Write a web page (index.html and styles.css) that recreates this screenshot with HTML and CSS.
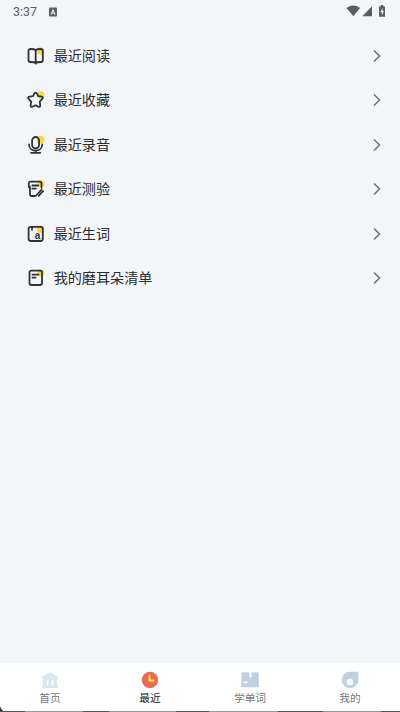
FILE: index.html
```html
<!DOCTYPE html>
<html lang="zh-CN">
<head>
<meta charset="utf-8">
<title>最近</title>
<link rel="stylesheet" href="styles.css">
</head>
<body>
<div class="app">
  <header class="status">
    <span class="time">3:37</span>
    <svg class="badge" width="8" height="10" viewBox="0 0 8 10"><rect y=".5" width="8" height="9" rx="1" fill="#5c5d5f"/><path d="M2 7.700 4 2.700 6 7.700M2.800 6h2.400" fill="none" stroke="#f2f6f9"/></svg>
    <svg class="signals" width="42" height="14" viewBox="0 0 42 14" fill="#5c5d5f"><path d="M.5 4Q7.300-.8 14 4L7.300 12.300z"/><path d="M16.300 12.300 26 2.300v10z"/><path d="M33 2.500h1.700V1h2.600v1.500H39v10.200h-6z"/><path d="M36.700 4 34.300 8h1.500v3.200l2.200-4h-1.500z" fill="#f2f6f9"/></svg>
  </header>
  <main class="list">
    <a class="row">
      <svg class="icon" viewBox="0 0 20 20"><circle class="dot" cx="14.500" cy="5" r="3.700"/><path d="M9.700 4.200C8.500 3 7 3 4.600 3Q2.500 3 2.500 5v9.300q0 1.700 2 1.700c2 0 4 0 5.200 1 1.200-1 3.200-1 5.300-1q1.800 0 1.800-1.700V5q0-2-2-2C12.500 3 11 3 9.700 4.200V17.500"/></svg>
      <span class="label">最近阅读</span>
      <svg class="chevron" viewBox="0 0 8 14"><path d="m1 1.500 5.500 5.500L1 12.500"/></svg>
    </a>
    <a class="row">
      <svg class="icon" viewBox="0 0 20 20"><circle class="dot" cx="14.800" cy="5" r="3.700"/><path d="M8.300 3.600Q9.700 1.500 11 3.600l1.200 2.500 3.300.6q2.300.5.800 2.200l-2.500 2.600.4 3.900q0 2-2 1.200L9.600 15.200 6.500 16.700q-2 .7-1.900-1.300l.6-3.800L2.600 9Q1.300 7.200 3.500 6.700l3.500-.6z"/></svg>
      <span class="label">最近收藏</span>
      <svg class="chevron" viewBox="0 0 8 14"><path d="m1 1.500 5.500 5.500L1 12.500"/></svg>
    </a>
    <a class="row">
      <svg class="icon" viewBox="0 0 20 20"><circle class="dot" cx="14.500" cy="4.700" r="3.900"/><rect x="6.100" y="2" width="7" height="11.300" rx="3.500"/><path d="M3 9.500c.2 8.200 13 8.200 13.300 0M9.700 15.500v2.300M5 17.800h9.300"/></svg>
      <span class="label">最近录音</span>
      <svg class="chevron" viewBox="0 0 8 14"><path d="m1 1.500 5.500 5.500L1 12.500"/></svg>
    </a>
    <a class="row">
      <svg class="icon" viewBox="0 0 20 20"><circle class="dot" cx="14.800" cy="4.800" r="3.700"/><path d="M9 17H5.500q-1.500 0-1.500-2V8H2.800V4.500Q2.800 2.600 4.600 2.600H13.500q2 0 2 2v4M6.300 6.500h6M6.300 9.600h3.500M10.300 16.500l5.300-6M12.800 16.800l2.800-3.300M16 13l1.200-.8"/></svg>
      <span class="label">最近&#x6D4B;验</span>
      <svg class="chevron" viewBox="0 0 8 14"><path d="m1 1.500 5.500 5.500L1 12.500"/></svg>
    </a>
    <a class="row">
      <svg class="icon" viewBox="0 0 20 20"><circle class="dot" cx="14.500" cy="5" r="3.800"/><rect x="2.600" y="2.800" width="14.200" height="14.200" rx="2.200"/><path d="M6 3v2.800"/><text class="letter" x="8.700" y="14.700">a</text></svg>
      <span class="label">最近生词</span>
      <svg class="chevron" viewBox="0 0 8 14"><path d="m1 1.500 5.500 5.500L1 12.500"/></svg>
    </a>
    <a class="row">
      <svg class="icon" viewBox="0 0 20 20"><circle class="dot" cx="14.700" cy="4.800" r="3.700"/><path d="M5.500 2.700H14q2 0 2 2V15q0 2-2 2H5.500q-2 0-2-2V4.700q0-2 2-2zM6.500 6.700h6M6.500 9.600h3"/></svg>
      <span class="label">我的磨耳朵清单</span>
      <svg class="chevron" viewBox="0 0 8 14"><path d="m1 1.500 5.500 5.500L1 12.500"/></svg>
    </a>
  </main>
  <nav class="tabs">
    <a class="tab">
      <svg viewBox="0 0 18 18"><path fill="#dce6f1" d="M1 6 9 1l8 5v2h-1v6h1v3H1v-3h1V8H1z"/><path stroke="#fff" stroke-width="1.500" d="M6.500 9v6M11.500 9v6"/></svg>
      <span>首页</span>
    </a>
    <a class="tab active">
      <svg viewBox="0 0 18 18"><circle cx="9" cy="9" r="8.200" fill="#e66d54"/><path d="M8.500 3.800V9.500h5" fill="none" stroke="#ffe43c" stroke-width="2"/></svg>
      <span>最近</span>
    </a>
    <a class="tab">
      <svg viewBox="0 0 18 18"><path fill="#bfd0e3" d="M.3 2.800Q.3 1.300 2 1.300h4.500Q8 1.300 8.500 2v4l1 .8 1-.8V2q.5-.7 1.500-.7h4.500q1.300 0 1.300 1.500v13.500H.3z"/><path stroke="#fff" stroke-width="1.500" d="M2.500 11.300h4"/></svg>
      <span>学单词</span>
    </a>
    <a class="tab">
      <svg viewBox="0 0 18 18"><path fill="#bfd0e3" d="M9 .7h8.300V9A8.300 8.300 0 1 1 9 .7z"/><rect x="5.700" y="7.700" width="6.600" height="6.300" rx="2.600" fill="#f3f8fd"/></svg>
      <span>我的</span>
    </a>
  </nav>
  <svg class="edge" width="400" height="7" viewBox="0 0 400 7"><path d="M0 1Q1 5 5 7H0z" fill="#333"/><path d="M0 6h400v1H0z" fill="#555"/><path d="M25 6h58v1H25zM109 6h67v1h-67zM209 6h69v1h-69zM323 6h58v1h-58z" fill="#999"/></svg>
</div>
</body>
</html>
```
FILE: styles.css
```css
* { box-sizing: border-box; }
body {
  margin: 0;
  background: #f2f6f9;
  font-family: "Noto Sans CJK SC", sans-serif;
}
.app {
  position: relative;
  display: flex;
  flex-direction: column;
  height: 712px;
  overflow: hidden;
}
.status {
  display: flex;
  align-items: center;
  height: 22px;
  padding: 0 12px 0 13px;
}
.time {
  width: 36px;
  padding-top: 1px;
  font: 12.4px/22px Roboto, sans-serif;
  color: #5c5d5f;
}
.badge { margin-top: 1px; }
.signals { margin-left: auto; }
.list {
  flex: 1;
  padding-top: 11.7px;
}
.row {
  display: flex;
  align-items: center;
  height: 44.5px;
  padding: 0 19px 0 26px;
}
.icon {
  width: 20px;
  height: 20px;
  fill: none;
  stroke: #303235;
  stroke-width: 1.8;
  stroke-linecap: round;
  stroke-linejoin: round;
}
.dot {
  fill: #fbd64b;
  stroke: none;
}
.letter {
  font: bold 10px "Liberation Sans", sans-serif;
  fill: #303235;
  stroke: none;
}
.label {
  margin-left: 7.7px;
  padding-bottom: 2px;
  font-size: 14.1px;
  line-height: 20px;
  color: #2b2c2e;
}
.chevron {
  width: 8px;
  height: 14px;
  margin-left: auto;
  fill: none;
  stroke: #77797c;
  stroke-width: 1.7;
}
.tabs {
  display: flex;
  height: 49px;
  background: #fff;
}
.tab {
  flex: 1;
  display: flex;
  flex-direction: column;
  align-items: center;
  padding-top: 8px;
  font-size: 10.7px;
  line-height: 18px;
  color: #77797c;
}
.tab svg {
  width: 18px;
  height: 18px;
}
.active { color: #222; }
.edge {
  position: absolute;
  left: 0;
  bottom: 0;
}
```
